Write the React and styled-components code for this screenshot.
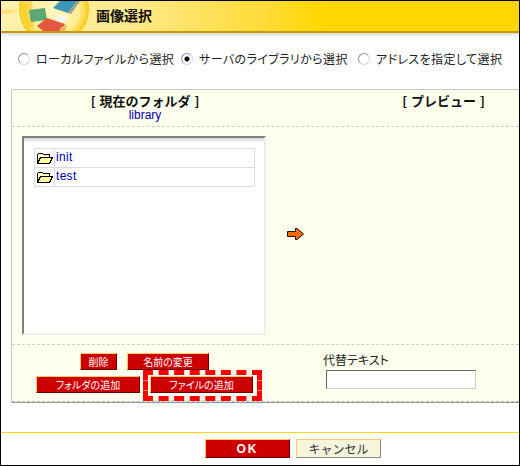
import React from 'react';
import styled, { createGlobalStyle } from 'styled-components';

const GlobalStyle = createGlobalStyle`
  html, body {
    margin: 0;
    padding: 0;
    background: #fff;
  }
  * {
    box-sizing: border-box;
  }
`;

const Page = styled.div`
  width: 520px;
  height: 466px;
  display: flex;
  flex-direction: column;
  border: 1px solid #000;
  background: #fff;
  color: #222;
  font-family: "Noto Sans CJK JP", "Liberation Sans", sans-serif;
  font-size: 12px;
  font-feature-settings: "palt";
  overflow: hidden;
`;

const Header = styled.div`
  height: 32px;
  flex: none;
  display: flex;
  align-items: center;
  overflow: hidden;
  background: linear-gradient(90deg, #fff2b0 0%, #ffe98a 25%, #ffdb33 52%, #ffd700 62%, #ffd700 100%);
  border-bottom: 2px solid #c99a10;
  box-shadow: 0 2px 3px rgba(0, 0, 0, 0.15);
`;

const Title = styled.h1`
  margin: 0 0 2px 5px;
  font-size: 14px;
  line-height: 16px;
  font-weight: 700;
  font-feature-settings: normal;
  color: #111;
`;

const RadioRow = styled.div`
  height: 56px;
  flex: none;
  padding: 0 0 4px 17px;
  display: flex;
  align-items: center;
  color: #222;
`;

const RadioLabel = styled.label`
  width: ${p => p.$w}px;
  flex: none;
  display: flex;
  align-items: center;
  gap: 6px;
  line-height: 14px;
  letter-spacing: 0.4px;
  white-space: nowrap;
`;

const RadioDot = styled.span`
  width: 12px;
  height: 12px;
  flex: none;
  border-radius: 50%;
  background: radial-gradient(circle at 50% 50%, ${p => (p.$on ? '#111 0 2.3px, #fff 2.8px' : '#fff 0 100%')});
  border: 1px solid #8a94a6;
  border-right-color: #d6dae0;
  border-bottom-color: #d6dae0;
`;

const Panel = styled.div`
  margin-left: 10px;
  height: 314px;
  flex: none;
  display: flex;
  flex-direction: column;
  background: #ffffee;
  border-top: 1px solid #c8c8c8;
  border-left: 1px solid #c8c8c8;
  border-bottom: 1px solid #999;
`;

const PanelHead = styled.div`
  height: 37px;
  flex: none;
  display: grid;
  grid-template-columns: 266px 1fr;
  border-bottom: 1px dashed #ccc;
`;

const HeadCell = styled.div`
  display: flex;
  flex-direction: column;
  align-items: center;
  padding-top: 3px;
  padding-left: ${p => p.$pad || 0}px;
`;

const HeadTitle = styled.div`
  font-size: 13px;
  line-height: 15px;
  font-weight: 700;
  font-feature-settings: normal;
  word-spacing: 1px;
  color: #111;
  white-space: pre;
`;

const FolderName = styled.a`
  margin-top: 1px;
  font-family: "Liberation Sans", sans-serif;
  font-size: 12px;
  line-height: 12px;
  color: #0000b0;
`;

const PanelBody = styled.div`
  height: 218px;
  flex: none;
  display: flex;
  align-items: flex-start;
  padding: 9px 0 0 10px;
  border-bottom: 1px dashed #ccc;
`;

const ListBox = styled.div`
  width: 244px;
  height: 199px;
  flex: none;
  padding: 10px 10px 0 10px;
  background: linear-gradient(180deg, #d8d8d8 0, #fff 5px);
  border: 2px solid #808080;
  border-right-color: #eee;
  border-bottom-color: #eee;
`;

const FolderTable = styled.div`
  border: 1px solid #ddd;
  border-bottom: none;
  width: 221px;
  background: #fff;
`;

const FolderRow = styled.div`
  display: grid;
  grid-template-columns: 20px 1fr;
  height: 19px;
  border-bottom: 1px solid #ddd;
`;

const IconCell = styled.div`
  display: flex;
  align-items: center;
  justify-content: center;
  border-right: 1px solid #ddd;
`;

const NameCell = styled.a`
  padding-left: 1px;
  font-family: "Liberation Sans", sans-serif;
  font-size: 12px;
  letter-spacing: 0.3px;
  line-height: 17px;
  color: #0000b0;
`;

const ArrowSlot = styled.div`
  margin: 92px 0 0 21px;
  line-height: 0;
`;

const PanelFoot = styled.div`
  flex: 1;
  display: grid;
  grid-template-columns: 272px 1fr;
  border-bottom: 1px dashed #bbb;
`;

const ButtonArea = styled.div`
  display: flex;
  flex-direction: column;
  gap: 6px;
  padding-top: 8px;
`;

const ButtonRow = styled.div`
  display: flex;
  gap: 10px;
  padding-left: ${p => p.$indent}px;
`;

const RedButton = styled.button`
  width: ${p => p.$w}px;
  height: 17px;
  padding: 0;
  position: relative;
  background: #cc0000;
  color: #fff;
  font-family: inherit;
  font-size: 10px;
  line-height: 13px;
  font-feature-settings: "palt";
  border: 1px solid #660000;
  border-top-color: #ffcc66;
  border-left-color: #ffcc66;
`;

const DashedMark = styled.span`
  position: absolute;
  left: -8px;
  top: -7px;
  width: 119px;
  height: 31px;
  border: 5px dashed #ff0000;
  pointer-events: none;
`;

const AltArea = styled.div`
  display: flex;
  flex-direction: column;
  align-items: flex-start;
  padding: 7px 0 0 39px;
`;

const AltLabel = styled.label`
  font-size: 12px;
  line-height: 16px;
  color: #222;
`;

const AltInput = styled.input`
  width: 150px;
  height: 19px;
  margin: 2px 0 0 3px;
  padding: 0;
  background: #fff;
  border: 1px solid #ccc;
  border-top-color: #666;
  border-left-color: #666;
`;

const Footer = styled.div`
  margin-top: 29px;
  flex: none;
  height: 32px;
  display: flex;
  gap: 6px;
  padding: 6px 0 0 204px;
  border-top: 1px solid #ffd700;
`;

const OkButton = styled.button`
  width: 85px;
  height: 19px;
  padding: 0;
  background: #cc0000;
  color: #fff;
  font-family: "Liberation Sans", sans-serif;
  font-size: 12px;
  font-weight: 700;
  letter-spacing: 2px;
  border: 1px solid #660000;
  border-top-color: #ffcc66;
  border-left-color: #ffcc66;
`;

const CancelButton = styled.button`
  width: 85px;
  height: 19px;
  padding: 0;
  background: #f5f5dc;
  color: #333;
  font-family: inherit;
  font-size: 12px;
  line-height: 15px;
  border: 1px solid #888;
  border-top-color: #ffcc66;
  border-left-color: #ffcc66;
`;

const HeaderLogo = () => (
  <svg width="90" height="30" viewBox="0 0 90 30" style={{ flex: 'none' }}>
    <defs>
      <radialGradient id="disc" cx="53" cy="8" r="36" gradientUnits="userSpaceOnUse">
        <stop offset="0" stopColor="#fff6c0" />
        <stop offset="0.7" stopColor="#ffee96" />
        <stop offset="0.88" stopColor="#ffd93a" />
        <stop offset="1" stopColor="#f5bf10" />
      </radialGradient>
    </defs>
    <path d="M0 8 Q10 8 18 10 Q10 13 0 13Z" fill="#ffe27a" />
    <circle cx="53" cy="8" r="35" fill="url(#disc)" />
    <path d="M20 5 L31 -3 L33 26 L26 26Z" fill="#f7c51a" opacity="0.55" />
    <path d="M28 9 L44 7 L46 19 L30 21Z" fill="#5aa873" />
    <path d="M52 7 L61 -2 L78 -2 L67 12Z" fill="#3b97b8" />
    <path d="M67 12 L78 -2 L80 -1 L70 13Z" fill="#a8a08a" />
    <path d="M55 12 L61 15 L66 12 L66 19 L60 23 L54 20Z" fill="#f9f6e6" />
    <path d="M36 25 L46 17 L64 23 L60 30 L42 30Z" fill="#e4573f" />
    <path d="M60 26 L66 24 L64 30 L58 30Z" fill="#f2b45e" />
  </svg>
);

const FolderIcon = () => (
  <svg width="16" height="11" viewBox="0 0 16 11" shapeRendering="crispEdges">
    <path d="M.5 10.5 V1.5 L1.5 .5 H5.5 L6.5 1.5 H12.5 V3.5" fill="#fff6c0" stroke="#000" />
    <path d="M.5 10.5 L3.5 4.5 H15.5 L12.5 10.5Z" fill="#ffff99" stroke="#000" />
  </svg>
);

const ArrowIcon = () => (
  <svg width="17" height="12" viewBox="0 0 17 12">
    <path d="M.5 3.5 H8.5 V.5 H10 L16.5 6 L10 11.5 H8.5 V8.5 H.5Z" fill="#f56a00" stroke="#1c0e00" />
  </svg>
);

const folders = ['init', 'test'];

const App = () => (
  <>
    <GlobalStyle />
    <Page>
      <Header>
        <HeaderLogo />
        <Title>画像選択</Title>
      </Header>
      <RadioRow>
        <RadioLabel $w={163}><RadioDot />ローカルファイルから選択</RadioLabel>
        <RadioLabel $w={177}><RadioDot $on />サーバのライブラリから選択</RadioLabel>
        <RadioLabel $w={150}><RadioDot />アドレスを指定して選択</RadioLabel>
      </RadioRow>
      <Panel>
        <PanelHead>
          <HeadCell>
            <HeadTitle>[ 現在のフォルダ ]</HeadTitle>
            <FolderName>library</FolderName>
          </HeadCell>
          <HeadCell $pad={90}>
            <HeadTitle>[ プレビュー ]</HeadTitle>
          </HeadCell>
        </PanelHead>
        <PanelBody>
          <ListBox>
            <FolderTable>
              {folders.map(name => (
                <FolderRow key={name}>
                  <IconCell><FolderIcon /></IconCell>
                  <NameCell>{name}</NameCell>
                </FolderRow>
              ))}
            </FolderTable>
          </ListBox>
          <ArrowSlot><ArrowIcon /></ArrowSlot>
        </PanelBody>
        <PanelFoot>
          <ButtonArea>
            <ButtonRow $indent={68}>
              <RedButton $w={37}>削除</RedButton>
              <RedButton $w={82}>名前の変更</RedButton>
            </ButtonRow>
            <ButtonRow $indent={24}>
              <RedButton $w={104}>フォルダの追加</RedButton>
              <RedButton $w={103}>
                ファイルの追加
                <DashedMark />
              </RedButton>
            </ButtonRow>
          </ButtonArea>
          <AltArea>
            <AltLabel>代替テキスト</AltLabel>
            <AltInput type="text" />
          </AltArea>
        </PanelFoot>
      </Panel>
      <Footer>
        <OkButton>OK</OkButton>
        <CancelButton>キャンセル</CancelButton>
      </Footer>
    </Page>
  </>
);

export default App;
